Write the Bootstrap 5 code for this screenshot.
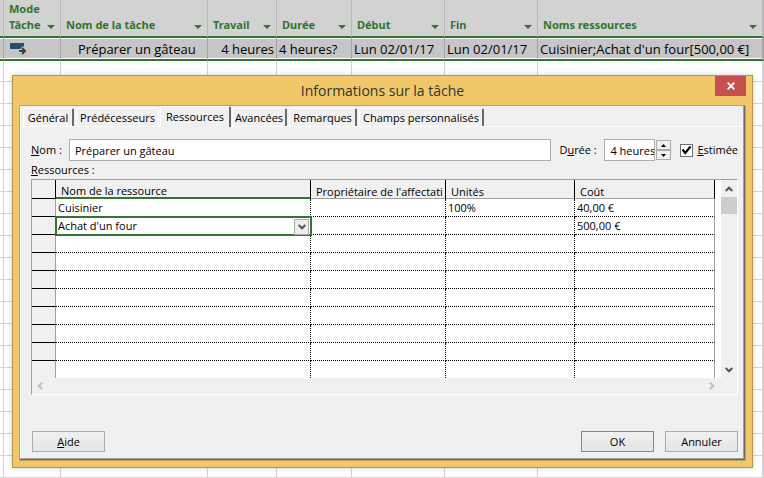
<!DOCTYPE html>
<html lang="fr">
<head>
<meta charset="utf-8">
<meta name="viewport" content="width=device-width, initial-scale=1">
<title>Informations sur la tâche</title>
<link href="https://cdn.jsdelivr.net/npm/bootstrap@5.3.0/dist/css/bootstrap.min.css" rel="stylesheet">
<style>
:root { --green: #31752f; --face: #f0f0f0; }
body { font-family: "Open Sans", "Noto Sans", sans-serif; font-size: 11px; line-height: 16px; color: #000; background: #fff; overflow: hidden; }
button, input, select { font: inherit; color: #000; }
table { table-layout: fixed; border-collapse: separate; border-spacing: 0; }

/* Task sheet */
.sheet th, .sheet td { border-right: 1px solid #d4d4d4; padding: 0; }
.sheet th { height: 38px; background: #d2d2d2; border-right-color: #b8b8b8; border-bottom: 2px solid var(--green); color: var(--green); font-family: "Noto Sans", sans-serif; font-size: 11px; line-height: 16px; vertical-align: bottom; padding: 0 5px 3px; white-space: nowrap; }
.sheet .blank td { height: 22px; border-bottom: 1px solid #d4d4d4; }
.sheet .blank:nth-child(2) td { height: 21px; }
.sheet .task td { height: 23px; background: #c6c6c6; border-right-color: #a6a6a6; border-bottom: 2px solid var(--green); box-shadow: inset 0 1px #fff, inset 0 -1px #fff; font-size: 13px; line-height: 18px; padding: 0 2px; white-space: nowrap; }
.sheet .task .indented { padding-left: 17px; }
.caret { width: 0; height: 0; border: 4px solid transparent; border-top-color: var(--green); border-bottom: 0; margin-bottom: 4px; }

/* Dialog */
.dialog { top: 75px; left: 12px; right: 11px; background: #f0c869; border: 1px solid #b5954f; padding: 0 6px 6px; box-shadow: 0 0 5px #0003; }
.title-row { height: 29px; }
.title-row h1 { font-size: 14px; line-height: 30px; color: #333; }
.close-box { width: 31px; height: 20px; background: #c75050; }
.pane { background: var(--face); border: 1px solid #c4a057; }
.pane-in { border-right: 1px solid #696969; border-bottom: 1px solid #696969; }
.pane-edge { border-left: 1px solid #fff; border-right: 1px solid #a0a0a0; border-bottom: 1px solid #a0a0a0; padding-bottom: 6px; }
.tabs { height: 21px; padding-left: 2px; border-bottom: 1px solid #fff; }
.tabs button { height: 18px; line-height: 17px; background: var(--face); border: 1px solid #fff; border-right: 2px solid #696969; border-bottom: 0; border-radius: 2px 2px 0 0; padding: 0; margin-right: 2px; white-space: nowrap; }
.tabs .chosen { height: 21px; line-height: 18px; margin: 0 1px -1px -1px; }
.t1 { width: 51px; } .t2 { width: 83px; } .tabs .t2 { border-right: 1px solid #fff; }
.t3 { width: 71px; } .t4 { width: 55px; } .t5 { width: 68px; } .t6 { width: 125px; }
.form-area { padding: 12px 5px 0 10px; }
.field { height: 22px; border: 1px solid #ababab; background: #fff; padding: 0 5px; border-radius: 0; }
.name-label { width: 38px; } .length-label { width: 45px; }
.length { width: 51px; }
.spin { width: 15px; height: 20px; margin: 0 9px 0 1px; }
.spin button { border: 1px solid #ababab; background: #f0f0f0; height: 10px; }
.tick { appearance: none; width: 13px; height: 13px; border: 1px solid #707070; background: #fff; }
.tick:checked { background: #fff url("data:image/svg+xml,%3Csvg xmlns='http://www.w3.org/2000/svg' viewBox='0 0 11 11'%3E%3Cpath d='M1.5 4.5 4.3 8 9.5 1.5' fill='none' stroke='%23000' stroke-width='2.2'/%3E%3C/svg%3E") center / 11px no-repeat; }
.grid-label { line-height: 18px; }

/* Resource grid */
.grid-box { border: 1px solid #a0a0a0; border-right-color: #fff; border-bottom-color: #fff; }
.res-wrap { min-width: 0; }
.res th, .res td { height: 18px; line-height: 15px; padding: 0 2px; background: #fff; border-right: 1px dotted #000; border-bottom: 1px dotted #000; white-space: nowrap; overflow: hidden; }
.res thead th { height: 19px; line-height: 13px; font-weight: 400; background: var(--face); border-right: 1px solid #000; border-bottom: 1px solid #a0a0a0; padding: 4px 0 0 5px; }
.res tbody th { background: var(--face); border-right: 1px solid #a0a0a0; border-bottom: 1px solid #000; }
.res thead th:first-child { border-bottom-color: #000; }
.res thead th.current { border-bottom: 2px solid var(--green); }
.res tr > td:last-child { border-right: 1px solid #a0a0a0; }
.res tbody tr:last-child > * { height: 17px; border-bottom: 0; }
.res td.picked { overflow: visible; outline: 2px solid var(--green); outline-offset: -1px; padding: 0; border-color: transparent; }
.picker { appearance: none; height: 16px; line-height: 15px; padding: 0 18px 0 2px; }
.drop { width: 15px; height: 16px; right: 1px; top: 1px; border: 1px solid #ababab; background: #eee; pointer-events: none; }
.gutter { width: 6px; }
.vbar { width: 16px; }
.up-arrow { margin: 5px auto 4px; }
.thumb { height: 17px; background: #cdcdcd; }
.hbar { height: 16px; padding: 0 22px 0 5px; }
.actions { padding: 36px 0 0 1px; gap: 11px; }
.actions button { width: 73px; height: 21px; border: 1px solid #ababab; background: linear-gradient(#f0f0f0, #e5e5e5); line-height: 18px; padding: 0; }
.actions .main { border-color: #3399ff; }
</style>
<script src="https://cdn.jsdelivr.net/npm/bootstrap@5.3.0/dist/js/bootstrap.bundle.min.js"></script>
</head>
<body>
<main class="position-relative">
<table class="sheet w-100">
<colgroup><col style="width:4px"><col style="width:57px"><col style="width:147px"><col style="width:69px"><col style="width:75px"><col style="width:93px"><col style="width:93px"><col><col style="width:1px"></colgroup>
<thead><tr>
<th class="p-0"></th>
<th><div class="d-flex align-items-end justify-content-between"><span>Mode<br>Tâche</span><i class="caret"></i></div></th>
<th><div class="d-flex align-items-end justify-content-between"><span>Nom de la tâche</span><i class="caret"></i></div></th>
<th><div class="d-flex align-items-end justify-content-between"><span>Travail</span><i class="caret"></i></div></th>
<th><div class="d-flex align-items-end justify-content-between"><span>Durée</span><i class="caret"></i></div></th>
<th><div class="d-flex align-items-end justify-content-between"><span>Début</span><i class="caret"></i></div></th>
<th><div class="d-flex align-items-end justify-content-between"><span>Fin</span><i class="caret"></i></div></th>
<th><div class="d-flex align-items-end justify-content-between"><span>Noms ressources</span><i class="caret"></i></div></th>
<th class="p-0"></th>
</tr></thead>
<tbody>
<tr class="task"><td class="p-0"></td>
<td><svg class="d-block ms-1" width="17" height="12" viewBox="0 0 17 12" role="img" aria-label="Planifiée automatiquement"><path d="M0 0h14v6H0z" fill="#1f4e79"/><path d="M8 8h7M11.5 4.500l3.500 3.500-3.500 3.500" fill="none" stroke="#c6c6c6" stroke-width="4"/><path d="M9 8h6M12 5l3 3-3 3" fill="none" stroke="#404040" stroke-width="2"/></svg></td>
<td class="indented">Préparer un gâteau</td><td class="text-end">4 heures</td><td>4 heures?</td><td>Lun 02/01/17</td><td>Lun 02/01/17</td><td>Cuisinier;Achat d'un four[500,00 €]</td><td class="p-0"></td></tr>
<tr class="blank"><td></td><td></td><td></td><td></td><td></td><td></td><td></td><td></td><td></td></tr>
<tr class="blank"><td></td><td></td><td></td><td></td><td></td><td></td><td></td><td></td><td></td></tr>
<tr class="blank"><td></td><td></td><td></td><td></td><td></td><td></td><td></td><td></td><td></td></tr>
<tr class="blank"><td></td><td></td><td></td><td></td><td></td><td></td><td></td><td></td><td></td></tr>
<tr class="blank"><td></td><td></td><td></td><td></td><td></td><td></td><td></td><td></td><td></td></tr>
<tr class="blank"><td></td><td></td><td></td><td></td><td></td><td></td><td></td><td></td><td></td></tr>
<tr class="blank"><td></td><td></td><td></td><td></td><td></td><td></td><td></td><td></td><td></td></tr>
<tr class="blank"><td></td><td></td><td></td><td></td><td></td><td></td><td></td><td></td><td></td></tr>
<tr class="blank"><td></td><td></td><td></td><td></td><td></td><td></td><td></td><td></td><td></td></tr>
<tr class="blank"><td></td><td></td><td></td><td></td><td></td><td></td><td></td><td></td><td></td></tr>
<tr class="blank"><td></td><td></td><td></td><td></td><td></td><td></td><td></td><td></td><td></td></tr>
<tr class="blank"><td></td><td></td><td></td><td></td><td></td><td></td><td></td><td></td><td></td></tr>
<tr class="blank"><td></td><td></td><td></td><td></td><td></td><td></td><td></td><td></td><td></td></tr>
<tr class="blank"><td></td><td></td><td></td><td></td><td></td><td></td><td></td><td></td><td></td></tr>
<tr class="blank"><td></td><td></td><td></td><td></td><td></td><td></td><td></td><td></td><td></td></tr>
<tr class="blank"><td></td><td></td><td></td><td></td><td></td><td></td><td></td><td></td><td></td></tr>
<tr class="blank"><td></td><td></td><td></td><td></td><td></td><td></td><td></td><td></td><td></td></tr>
<tr class="blank"><td></td><td></td><td></td><td></td><td></td><td></td><td></td><td></td><td></td></tr>
<tr class="blank"><td></td><td></td><td></td><td></td><td></td><td></td><td></td><td></td><td></td></tr>
</tbody>
</table>

<section class="dialog position-absolute" role="dialog" aria-labelledby="dlg-title">
<div class="title-row position-relative">
<h1 id="dlg-title" class="m-0 fw-normal text-center">Informations sur la tâche</h1>
<button type="button" class="close-box position-absolute top-0 end-0 border-0 p-0 d-flex align-items-center justify-content-center" aria-label="Fermer"><svg width="8" height="8" viewBox="0 0 8 8"><path d="M.7.7l6.6 6.6M7.3.7L.7 7.3" stroke="#fff" stroke-width="1.8"/></svg></button>
</div>
<div class="pane"><div class="pane-in"><div class="pane-edge">
<div class="tabs d-flex align-items-end" role="tablist">
<button type="button" role="tab" class="t1">Général</button>
<button type="button" role="tab" class="t2">Prédécesseurs</button>
<button type="button" role="tab" class="t3 chosen" aria-selected="true">Ressources</button>
<button type="button" role="tab" class="t4">Avancées</button>
<button type="button" role="tab" class="t5">Remarques</button>
<button type="button" role="tab" class="t6">Champs personnalisés</button>
</div>
<form class="form-area">
<div class="d-flex align-items-center">
<label class="name-label" for="nom"><u>N</u>om :</label>
<input id="nom" class="field flex-fill me-2" type="text" value="Préparer un gâteau">
<label class="length-label" for="duree">D<u>u</u>rée :</label>
<input id="duree" class="field length pe-0" type="text" value="4 heures?">
<div class="spin d-flex flex-column">
<button type="button" class="p-0 d-flex align-items-center justify-content-center" aria-label="Augmenter"><svg width="5" height="3" viewBox="0 0 5 3"><path d="M0 3 2.5 0 5 3z"/></svg></button>
<button type="button" class="p-0 d-flex align-items-center justify-content-center" aria-label="Diminuer"><svg width="5" height="3" viewBox="0 0 5 3"><path d="M0 0 2.5 3 5 0z"/></svg></button>
</div>
<input id="estimee" class="tick me-1" type="checkbox" checked><label for="estimee"><u>E</u>stimée</label>
</div>
<div class="grid-label"><u>R</u>essources :</div>
<div class="grid-box">
<div class="d-flex">
<div class="res-wrap flex-fill">
<table class="res w-100">
<colgroup><col style="width:24px"><col style="width:255px"><col style="width:135px"><col style="width:129px"><col></colgroup>
<thead><tr><th></th><th class="current">Nom de la ressource</th><th>Propriétaire de l'affectati</th><th>Unités</th><th>Coût</th></tr></thead>
<tbody>
<tr><th></th><td>Cuisinier</td><td></td><td>100%</td><td>40,00 €</td></tr>
<tr><th></th><td class="picked"><div class="position-relative"><select class="picker w-100 d-block border-0 bg-transparent" aria-label="Nom de la ressource"><option>Achat d'un four</option><option>Cuisinier</option></select><span class="drop position-absolute d-flex align-items-center justify-content-center"><svg width="8" height="6" viewBox="0 0 8 6"><path d="M.7 1 4 4.3 7.3 1" fill="none" stroke="#555" stroke-width="2"/></svg></span></div></td><td></td><td></td><td>500,00 €</td></tr>
<tr><th></th><td></td><td></td><td></td><td></td></tr>
<tr><th></th><td></td><td></td><td></td><td></td></tr>
<tr><th></th><td></td><td></td><td></td><td></td></tr>
<tr><th></th><td></td><td></td><td></td><td></td></tr>
<tr><th></th><td></td><td></td><td></td><td></td></tr>
<tr><th></th><td></td><td></td><td></td><td></td></tr>
<tr><th></th><td></td><td></td><td></td><td></td></tr>
<tr><th></th><td></td><td></td><td></td><td></td></tr>
</tbody>
</table>
</div>
<div class="gutter flex-shrink-0 bg-white"></div>
<div class="vbar flex-shrink-0 d-flex flex-column">
<svg class="up-arrow" width="8" height="8" viewBox="0 0 8 8"><path d="M.7 6 4 2.7 7.3 6" fill="none" stroke="#555" stroke-width="2"/></svg>
<div class="thumb"></div>
<svg class="mx-auto mt-auto mb-1" width="8" height="8" viewBox="0 0 8 8"><path d="M.7 2 4 5.3 7.3 2" fill="none" stroke="#555" stroke-width="2"/></svg>
</div>
</div>
<div class="hbar d-flex align-items-center justify-content-between">
<svg width="6" height="8" viewBox="0 0 6 8"><path d="M5 .7 1.7 4 5 7.3" fill="none" stroke="#bbb" stroke-width="2"/></svg>
<svg width="6" height="8" viewBox="0 0 6 8"><path d="M1 .7 4.3 4 1 7.3" fill="none" stroke="#bbb" stroke-width="2"/></svg>
</div>
</div>
<div class="actions d-flex">
<button type="button" class="me-auto"><u>A</u>ide</button>
<button type="submit" class="main">OK</button>
<button type="button">Annuler</button>
</div>
</form>
</div></div></div>
</section>
</main>
</body>
</html>
